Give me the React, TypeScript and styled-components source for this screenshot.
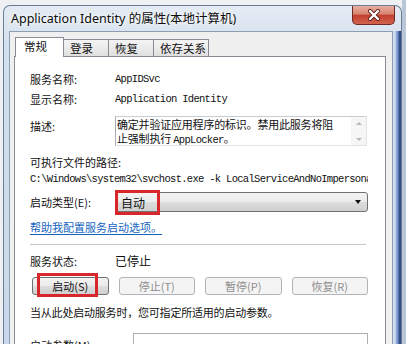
import React from "react";
import styled, { createGlobalStyle } from "styled-components";

const GlobalStyle = createGlobalStyle`
  html, body {
    margin: 0;
    padding: 0;
  }
  body {
    width: 406px;
    height: 344px;
    overflow: hidden;
    background: linear-gradient(90deg, #eef0f3 0, #eef0f3 402px, #b9c6d8 402px);
    font-family: "Noto Sans CJK SC", sans-serif;
    color: #111;
  }
`;

const Window = styled.div`
  margin: 5px 0 0 3px;
  width: 399px;
  height: 360px;
  box-sizing: border-box;
  border: 1px solid #6b7d92;
  border-bottom: none;
  border-radius: 7px 7px 0 0;
  background: linear-gradient(180deg, #e4ebf4 0%, #d3dfed 12%, #c8d7ea 100%);
  display: flex;
  flex-direction: column;
`;

const TitleBar = styled.div`
  height: 26px;
  display: flex;
  justify-content: space-between;
  align-items: flex-start;
  padding-left: 7px;
`;

const TitleText = styled.span`
  font-family: "Noto Sans", "Noto Sans CJK SC", sans-serif;
  font-size: 12.5px;
  line-height: 24px;
  padding-top: 1px;
  color: #0c0c0c;
  text-shadow: 0 0 6px #ffffff, 0 0 3px #ffffff;
`;

const CloseButton = styled.div`
  width: 41px;
  height: 18px;
  margin-right: 6px;
  border: 1px solid #6e2b24;
  border-top: none;
  border-radius: 0 0 5px 5px;
  background: linear-gradient(180deg, #eab0a2 0%, #d8826f 45%, #c2402f 52%, #d2634f 100%);
  display: flex;
  align-items: center;
  justify-content: center;
`;

const FrameBody = styled.div`
  flex: 1;
  display: flex;
  padding-left: 5px;
`;

const RightEdge = styled.div`
  width: 8px;
  flex: none;
  background: linear-gradient(90deg, #d2dded 0, #d2dded 2px, #9cb4dc 3px, #6f8fc8 5px, #35508a 6px, #2e4a82 8px);
`;

const Client = styled.div`
  flex: 1;
  min-width: 0;
  border: 1px solid #8d9db2;
  background: #f0f0f0;
  padding: 5px 6px 0 4px;
`;

const TabStrip = styled.div`
  display: flex;
  align-items: flex-end;
  height: 20px;
  padding-left: 1px;
  margin-bottom: -1px;
  position: relative;
  z-index: 1;
`;

const Tab = styled.div<{ $active?: boolean; $w: number }>`
  width: ${p => p.$w}px;
  box-sizing: border-box;
  height: ${p => (p.$active ? 20 : 17)}px;
  margin-bottom: ${p => (p.$active ? 0 : 1)}px;
  border: 1px solid #898c95;
  border-bottom: none;
  border-left-width: ${p => (p.$active ? 1 : 0)}px;
  background: ${p => (p.$active ? "#ffffff" : "linear-gradient(180deg, #f4f4f4 0%, #ebebeb 50%, #dfdfdf 100%)")};
  font-size: 11.5px;
  line-height: ${p => (p.$active ? 17 : 16)}px;
  padding-left: ${p => (p.$active ? 8 : 6)}px;
  color: #111;
`;

const Panel = styled.div`
  background: #ffffff;
  border: 1px solid #898c95;
  height: 300px;
  padding: 12px 17px 0 15px;
`;

const Row = styled.div<{ $h: number; $mt?: number }>`
  display: grid;
  grid-template-columns: 85px minmax(0, 1fr);
  align-items: start;
  height: ${p => p.$h}px;
  margin-top: ${p => p.$mt ?? 0}px;
`;

const Label = styled.div<{ $lh: number; $mt?: number }>`
  font-size: 11px;
  line-height: ${p => p.$lh}px;
  margin-top: ${p => p.$mt ?? 0}px;
  white-space: nowrap;
`;

const Mono = styled.div<{ $lh: number }>`
  font-family: "Liberation Mono", monospace;
  font-size: 10.5px;
  letter-spacing: -0.7px;
  line-height: ${p => p.$lh}px;
  white-space: nowrap;
  overflow: hidden;
  color: #111;
`;

const DescBox = styled.div`
  height: 30px;
  box-sizing: border-box;
  border: 1px solid #abadb3;
  border-top-color: #c9ccd2;
  border-right-color: #e2e3ea;
  border-bottom-color: #e2e3ea;
  display: grid;
  grid-template-columns: minmax(0, 1fr) 15px;
  margin-right: 1px;
`;

const DescLine = styled.div`
  font-size: 11px;
  line-height: 14px;
  height: 14px;
  padding-left: 1px;
  letter-spacing: -0.2px;
  overflow: hidden;
  white-space: nowrap;
`;

const MonoInline = styled.span`
  font-family: "Liberation Mono", monospace;
  font-size: 10.5px;
  letter-spacing: -0.7px;
`;

const ScrollBar = styled.div`
  background: #f6f6f6;
  display: flex;
  flex-direction: column;
  justify-content: space-between;
  align-items: center;
  padding: 5px 0 4px;
`;

const Arrow = styled.div<{ $down?: boolean }>`
  width: 0;
  height: 0;
  border-left: 3px solid transparent;
  border-right: 3px solid transparent;
  ${p => (p.$down ? "border-top: 3px solid #b8b8b8;" : "border-bottom: 3px solid #b8b8b8;")}
`;

const PathLine = styled(Mono)`
  height: 17px;
`;

const Combo = styled.div`
  position: relative;
  height: 20px;
  box-sizing: border-box;
  border: 1px solid #707070;
  border-radius: 3px;
  background: linear-gradient(180deg, #f3f3f3 0%, #ebebeb 50%, #dddddd 51%, #d0d0d0 100%);
  display: flex;
  align-items: center;
  justify-content: space-between;
  padding: 0 5px 0 5px;
  font-size: 12px;
`;

const DropArrow = styled.div`
  width: 0;
  height: 0;
  border-left: 3.5px solid transparent;
  border-right: 3.5px solid transparent;
  border-top: 4px solid #111;
  margin-right: 1px;
`;

const Highlight = styled.div<{ $l: number; $t: number; $w: number; $h: number }>`
  position: absolute;
  left: ${p => p.$l}px;
  top: ${p => p.$t}px;
  width: ${p => p.$w}px;
  height: ${p => p.$h}px;
  box-sizing: border-box;
  border: 3px solid #d9262b;
  pointer-events: none;
`;

const HelpLink = styled.a`
  display: block;
  margin-top: 7px;
  height: 16px;
  font-size: 11px;
  line-height: 16px;
  color: #1565c0;
  text-decoration: underline;
  text-underline-offset: 2px;
`;

const Separator = styled.div`
  margin: 9px 2px 0 0;
  height: 1px;
  background: #c4c8cc;
`;

const StatusValue = styled.div`
  font-size: 12px;
  line-height: 18px;
`;

const ButtonRow = styled.div`
  display: grid;
  grid-template-columns: repeat(4, 1fr);
  column-gap: 10px;
  margin: 7px 0 0 2px;
  width: 336px;
`;

const Button = styled.div<{ $disabled?: boolean }>`
  position: relative;
  height: 18px;
  box-sizing: border-box;
  border: 1px solid ${p => (p.$disabled ? "#b1b5b9" : "#707070")};
  border-radius: 3px;
  background: ${p =>
    p.$disabled
      ? "#f4f4f4"
      : "linear-gradient(180deg, #f3f3f3 0%, #ebebeb 50%, #dddddd 51%, #d0d0d0 100%)"};
  color: ${p => (p.$disabled ? "#8e8e8e" : "#111")};
  font-size: 11px;
  line-height: 16px;
  text-align: center;
`;

const Note = styled.div`
  margin-top: 8px;
  font-size: 11px;
  line-height: 18px;
  letter-spacing: -0.2px;
`;

const ParamInput = styled.div`
  height: 20px;
  margin: 6px 0 0 18px;
  box-sizing: border-box;
  border: 1px solid #abadb3;
  background: #ffffff;
`;

const tabs = [
  { name: "常规", w: 49, active: true },
  { name: "登录", w: 45 },
  { name: "恢复", w: 45 },
  { name: "依存关系", w: 55 },
];

const buttons = [
  { name: "启动(S)", disabled: false },
  { name: "停止(T)", disabled: true },
  { name: "暂停(P)", disabled: true },
  { name: "恢复(R)", disabled: true },
];

const App: React.FC = () => {
  return (
    <>
      <GlobalStyle />
      <Window>
        <TitleBar>
          <TitleText>Application Identity 的属性(本地计算机)</TitleText>
          <CloseButton>
            <svg width="14" height="12" viewBox="0 0 14 12">
              <path d="M3 2 L11 10 M11 2 L3 10" stroke="#5a1d16" strokeWidth="4" strokeLinecap="round" />
              <path d="M3 2 L11 10 M11 2 L3 10" stroke="#ffffff" strokeWidth="2.4" strokeLinecap="round" />
            </svg>
          </CloseButton>
        </TitleBar>
        <FrameBody>
          <Client>
            <TabStrip>
              {tabs.map(t => (
                <Tab key={t.name} $active={t.active} $w={t.w}>
                  {t.name}
                </Tab>
              ))}
            </TabStrip>
            <Panel>
              <Row $h={20}>
                <Label $lh={20}>服务名称:</Label>
                <Mono $lh={20}>AppIDSvc</Mono>
              </Row>
              <Row $h={20}>
                <Label $lh={20}>显示名称:</Label>
                <Mono $lh={20}>Application Identity</Mono>
              </Row>
              <Row $h={30} $mt={7}>
                <Label $lh={20}>描述:</Label>
                <DescBox>
                  <div>
                    <DescLine>确定并验证应用程序的标识。禁用此服务将阻</DescLine>
                    <DescLine>
                      止强制执行 <MonoInline>AppLocker</MonoInline>。
                    </DescLine>
                  </div>
                  <ScrollBar>
                    <Arrow />
                    <Arrow $down />
                  </ScrollBar>
                </DescBox>
              </Row>
              <Label $lh={18} $mt={7}>
                可执行文件的路径:
              </Label>
              <PathLine $lh={17}>C:\Windows\system32\svchost.exe -k LocalServiceAndNoImpersonation</PathLine>
              <Row $h={20} $mt={4}>
                <Label $lh={20}>启动类型(E):</Label>
                <Combo>
                  <span>自动</span>
                  <DropArrow />
                  <Highlight $l={-1} $t={-3} $w={45} $h={25} />
                </Combo>
              </Row>
              <HelpLink>帮助我配置服务启动选项。</HelpLink>
              <Separator />
              <Row $h={18} $mt={7}>
                <Label $lh={18}>服务状态:</Label>
                <StatusValue>已停止</StatusValue>
              </Row>
              <ButtonRow>
                {buttons.map((b, i) => (
                  <Button key={b.name} $disabled={b.disabled}>
                    {b.name}
                    {i === 0 && <Highlight $l={4} $t={-5} $w={61} $h={24} />}
                  </Button>
                ))}
              </ButtonRow>
              <Note>当从此处启动服务时，您可指定所适用的启动参数。</Note>
              <Row $h={26} $mt={6}>
                <Label $lh={20} $mt={8}>启动参数(M):</Label>
                <ParamInput />
              </Row>
            </Panel>
          </Client>
          <RightEdge />
        </FrameBody>
      </Window>
    </>
  );
};

export default App;
